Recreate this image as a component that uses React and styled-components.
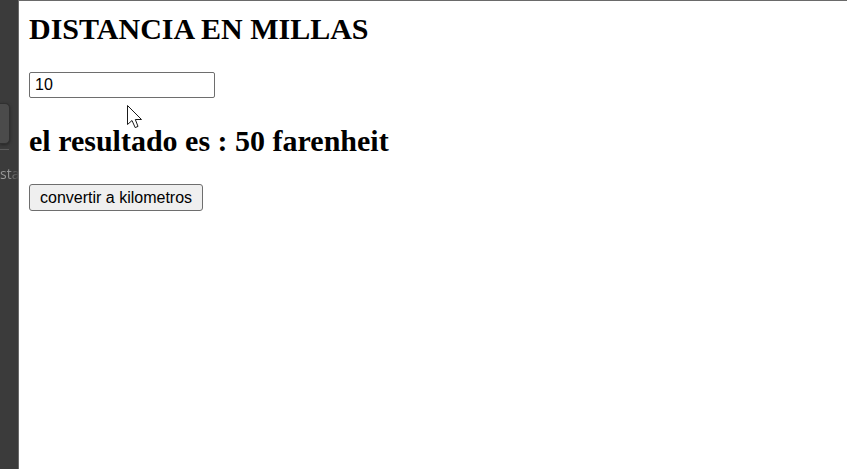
import React, { useState } from "react";
import styled, { createGlobalStyle } from "styled-components";

const GlobalStyle = createGlobalStyle`
  body {
    margin: 0;
    background: #ffffff;
  }
  *, *::before, *::after {
    box-sizing: border-box;
  }
`;

const Screen = styled.div`
  display: flex;
  min-height: 100vh;
`;

const Strip = styled.aside`
  flex: none;
  width: 18px;
  padding-top: 103px;
  background: #3b3b3b;
`;

const StripTab = styled.div`
  width: 10px;
  height: 41px;
  border: 1px solid #303030;
  border-left: 0;
  border-radius: 0 5px 5px 0;
  background: #4b4b4b;
  box-shadow: 0 1px 3px #262626;
`;

const StripRule = styled.div`
  width: 9px;
  height: 1px;
  margin-top: 5px;
  background: #5c5c5c;
`;

const StripLabel = styled.div`
  margin-top: 14px;
  font: 14px/20px "Open Sans", sans-serif;
  white-space: nowrap;
  color: transparent;
  background: linear-gradient(90deg, #9a9a9a 8px, #484848 18px);
  background-clip: text;
`;

const Page = styled.main`
  flex: 1;
  min-width: 0;
  padding: 11px 10px;
  border-top: 1px solid #6a6a6a;
  border-left: 1px solid #6a6a6a;
`;

const Form = styled.form`
  display: flex;
  flex-direction: column;
  align-items: flex-start;
  gap: 26px;
`;

const Heading = styled.h2`
  margin: 0;
  font: bold 30px/34px "Liberation Serif", serif;
  color: #000000;
`;

const DistanceInput = styled.input`
  width: 186px;
  max-width: 100%;
  height: 26px;
  padding: 0 5px;
  border: 1px solid #6e6e6e;
  border-radius: 2px;
  background: #ffffff;
  color: #000000;
  font: 16px/20px "Liberation Sans", sans-serif;
`;

const ConvertButton = styled.button`
  height: 27px;
  padding: 0 10px;
  border: 1px solid #6e6e6e;
  border-radius: 3px;
  background: #efefef;
  color: #000000;
  font: 16px/20px "Liberation Sans", sans-serif;
`;

const Pointer = styled.svg`
  position: absolute;
  left: 126px;
  top: 104px;
  pointer-events: none;
`;

export default function App() {
  const [distance, setDistance] = useState("10");

  return (
    <>
      <GlobalStyle />
      <Screen>
        <Strip>
          <StripTab />
          <StripRule />
          <StripLabel>sta</StripLabel>
        </Strip>
        <Page>
          <Form onSubmit={(event) => event.preventDefault()}>
            <Heading>
              <label htmlFor="distance">DISTANCIA EN MILLAS</label>
            </Heading>
            <DistanceInput
              id="distance"
              value={distance}
              onChange={(event) => setDistance(event.target.value)}
            />
            <Heading>el resultado es : 50 farenheit</Heading>
            <ConvertButton type="submit">convertir a kilometros</ConvertButton>
          </Form>
        </Page>
      </Screen>
      <Pointer width="18" height="26" viewBox="0 0 18 26" aria-hidden="true">
        <path
          d="M1.5 1.5V20.5L6 16.5L9.2 23.6L12 22.4L9.3 15.5H15.5Z"
          fill="#ffffff"
          stroke="#1a1a1a"
          strokeWidth="1"
        />
      </Pointer>
    </>
  );
}
